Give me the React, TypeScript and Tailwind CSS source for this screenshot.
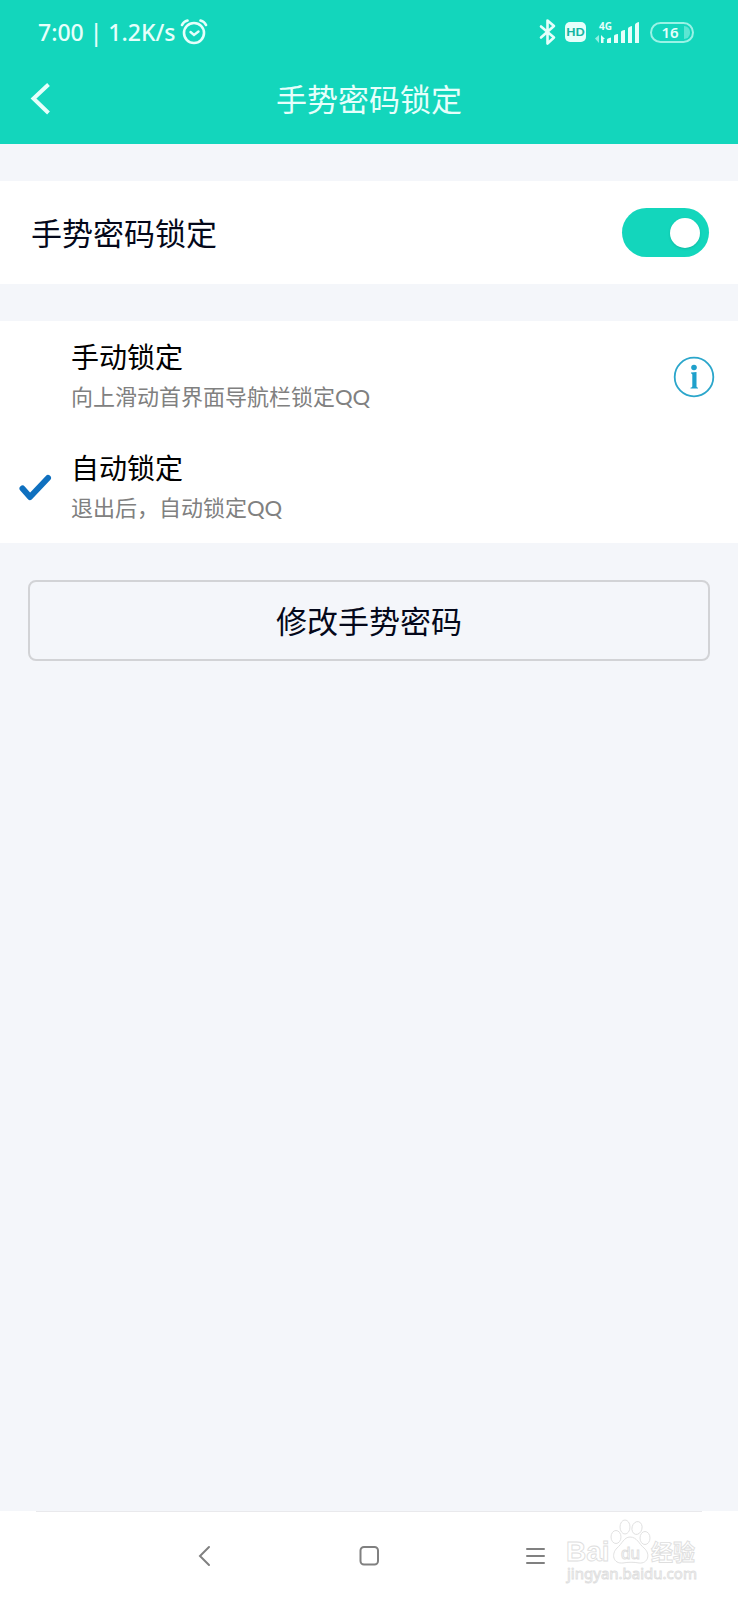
import React, { useState } from 'react';

function AlarmIcon() {
  return (
    <svg width="28" height="26" viewBox="0 0 28 26" fill="none" stroke="currentColor" strokeLinecap="round" aria-hidden="true">
      <circle cx="14" cy="14" r="10" strokeWidth="2.6" />
      <path d="M10.5 13 L14 16 L18.5 12.5" strokeWidth="2.4" />
      <path d="M2 6 Q3.5 2.5 7.5 1.5 M26 6 Q24.5 2.5 20.5 1.5" strokeWidth="2.6" />
    </svg>
  );
}

function BluetoothIcon() {
  return (
    <svg width="17" height="28" viewBox="0 0 17 28" fill="none" stroke="currentColor" strokeWidth="2.6" strokeLinejoin="round" strokeLinecap="round" aria-hidden="true">
      <path d="M2 8.5 L15 19.5 L8.5 25.5 V2.5 L15 8 L2 19.5" />
    </svg>
  );
}

function SignalIcon() {
  return (
    <svg width="46" height="24" viewBox="0 0 46 24" fill="currentColor" role="img" aria-label="4G">
      <text x="4" y="10" fontSize="10" fontWeight="700" fontFamily="'Noto Sans', sans-serif">4G</text>
      <path d="M4 15 V23 L0 18.5 Z" opacity="0.6" />
      <path d="M6 23 V15 L10 19 H8.5 V23 Z" />
      <path d="M12 23 V19.5 Q12 18.5 16 17.5 V23 Z" />
      <path d="M19 23 V16 Q19 14.5 23 14 V23 Z" />
      <path d="M26 23 V12 Q26 10.5 30 10 V23 Z" />
      <path d="M33 23 V8.5 Q33 7 37 6 V23 Z" />
      <path d="M40 23 V5 Q40 3 44 2 V23 Z" />
    </svg>
  );
}

function CheckIcon() {
  return (
    <svg className="hidden peer-checked:block" width="34" height="28" viewBox="0 0 34 28" fill="none" stroke="#0f70bf" strokeWidth="6" strokeLinecap="round" strokeLinejoin="round" aria-hidden="true">
      <path d="M4.5 14.5 L12 23 L30 4" />
    </svg>
  );
}

function InfoIcon() {
  return (
    <svg width="42" height="42" viewBox="0 0 42 42" fill="#1fa0cb" aria-hidden="true">
      <circle cx="21" cy="21" r="19.3" fill="none" stroke="#2ba6cb" strokeWidth="1.8" />
      <circle cx="21" cy="11.5" r="2.8" />
      <path d="M18 16.5 L23.5 16 V30.5 Q23.5 31.5 25 31.7 V32.5 H17.5 V31.7 Q19.3 31.5 19.3 30.5 V18.8 Q19.3 17.6 18 17.5 Z" />
    </svg>
  );
}

function Watermark() {
  return (
    <svg className="pointer-events-none absolute right-[38px] bottom-[12px]" width="138" height="72" viewBox="0 0 138 72" fill="#fff" stroke="#dedede" strokeWidth="0.9" aria-hidden="true">
      <text x="4" y="45" fontSize="28" fontWeight="700" fontFamily="'Liberation Sans', sans-serif">Bai</text>
      <ellipse cx="54" cy="21" rx="5" ry="6.5" />
      <ellipse cx="63" cy="11" rx="5" ry="7" />
      <ellipse cx="75" cy="12" rx="5" ry="6.5" transform="rotate(14 75 12)" />
      <ellipse cx="83" cy="22" rx="5" ry="6.5" />
      <path d="M68 21 C75 21 77 28 82 32 C89 38 86 48 77 47 C72 46 66 46 61 47 C51 48 49 38 55 32 C60 28 62 21 68 21 Z" />
      <text x="59" y="43" fontSize="17" fontFamily="'Liberation Sans', sans-serif">du</text>
      <text x="89" y="44" fontSize="22" fontWeight="700" fontFamily="'Noto Sans CJK SC', sans-serif">经验</text>
      <text x="5" y="63" fontSize="15" fontFamily="'Noto Sans', sans-serif">jingyan.baidu.com</text>
    </svg>
  );
}

const lockModes = [
  { id: 'manual', title: '手动锁定', desc: '向上滑动首界面导航栏锁定QQ', info: true },
  { id: 'auto', title: '自动锁定', desc: '退出后，自动锁定QQ', info: false },
];

export default function App() {
  const [enabled, setEnabled] = useState(true);
  const [mode, setMode] = useState('auto');

  return (
    <div className="flex min-h-screen flex-col bg-[#f4f6fa] font-['Lato','Noto_Sans_CJK_SC',sans-serif] text-[#04081a]">
      <header className="bg-[#13d6bc] pb-[10px] text-[#e6fffb]">
        <div className="flex h-16 items-center justify-between pr-11 pl-[38px]">
          <div className="flex items-center gap-1">
            <span className="font-['Noto_Sans',sans-serif] text-[23px] leading-8 font-medium">7:00 | 1.2K/s</span>
            <AlarmIcon />
          </div>
          <div className="flex items-center gap-[9px]">
            <BluetoothIcon />
            <span className="flex h-5 w-[21px] items-center justify-center rounded-[5px] bg-[#e6fffb] text-[12px] leading-5 font-black text-[#14b5a2]">HD</span>
            <SignalIcon />
            <span className="relative flex h-[21px] w-11 items-center justify-center overflow-hidden rounded-full border-2 border-[#9af3e6] pr-1 font-['Noto_Sans',sans-serif] text-[15px] leading-4 font-semibold">
              16
              <span className="absolute inset-y-0.5 right-0.5 w-1.5 rounded-r-full bg-[#5ce6d3]" />
            </span>
          </div>
        </div>
        <div className="grid h-[70px] grid-cols-[1fr_auto_1fr] items-center px-7">
          <button type="button" aria-label="返回" className="w-6">
            <svg width="24" height="34" viewBox="0 0 24 34" fill="none" stroke="currentColor" strokeWidth="4">
              <path d="M20.5 2.5 L5.5 16.5 L20.5 31" />
            </svg>
          </button>
          <h1 className="text-[31px] leading-10">手势密码锁定</h1>
        </div>
      </header>

      <main className="flex-1">
        <label className="mt-[37px] flex h-[103px] items-center justify-between bg-white pr-[29px] pl-[31px]">
          <span className="text-[31px] leading-10">手势密码锁定</span>
          <input
            type="checkbox"
            role="switch"
            checked={enabled}
            onChange={(e) => setEnabled(e.target.checked)}
            className="flex h-[49px] w-[87px] appearance-none items-center rounded-full bg-gray-300 px-[9px] before:size-[30px] before:rounded-full before:bg-white before:shadow-sm before:content-[''] checked:justify-end checked:bg-[#13d6bc]"
          />
        </label>

        <div role="radiogroup" aria-label="锁定方式" className="mt-[37px] bg-white">
          {lockModes.map((item) => (
            <div key={item.id} className="flex h-[111px] items-center pr-[23px]">
              <label className="flex flex-1 items-center">
                <span className="flex w-[71px] items-center pl-[18px]">
                  <input
                    type="radio"
                    name="lock-mode"
                    value={item.id}
                    checked={mode === item.id}
                    onChange={() => setMode(item.id)}
                    className="peer appearance-none"
                  />
                  <CheckIcon />
                </span>
                <span className="flex flex-col">
                  <span className="text-[28px] leading-10 text-black">{item.title}</span>
                  <span className="text-[22px] leading-10 text-[#808080]">{item.desc}</span>
                </span>
              </label>
              {item.info && (
                <button type="button" aria-label="说明">
                  <InfoIcon />
                </button>
              )}
            </div>
          ))}
        </div>

        <div className="px-7 pt-[37px]">
          <button type="button" className="h-[81px] w-full rounded-lg border-2 border-[#d2d3d6] text-[31px] leading-10">
            修改手势密码
          </button>
        </div>
      </main>

      <nav className="relative bg-white text-[#808080]">
        <div className="mx-9 border-t border-[#e9e9ec]" />
        <div className="flex h-[88px] items-center justify-center">
          <button type="button" aria-label="后退" className="flex w-[166px] justify-center">
            <svg width="20" height="22" viewBox="0 0 20 22" fill="none" stroke="currentColor" strokeWidth="2" strokeLinecap="round">
              <path d="M16 2 L7 11 L16 20" />
            </svg>
          </button>
          <button type="button" aria-label="主页" className="flex w-[166px] justify-center">
            <svg width="22" height="22" viewBox="0 0 22 22" fill="none" stroke="currentColor" strokeWidth="2">
              <rect x="2.5" y="2" width="17.5" height="17.5" rx="3.5" />
            </svg>
          </button>
          <button type="button" aria-label="菜单" className="flex w-[166px] justify-center">
            <svg width="20" height="22" viewBox="0 0 20 22" stroke="currentColor" strokeWidth="2" strokeLinecap="round">
              <path d="M2 4 H19 M2 11 H19 M2 18 H19" />
            </svg>
          </button>
        </div>
        <Watermark />
      </nav>
    </div>
  );
}
